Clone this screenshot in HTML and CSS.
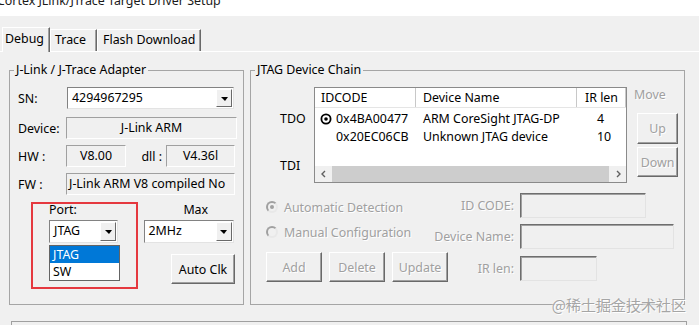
FILE: index.html
```html
<!DOCTYPE html>
<html lang="en">
<head>
  <meta charset="UTF-8" />
  <title>Cortex JLink/JTrace Target Driver Setup</title>
  <link rel="stylesheet" href="styles.css">
</head>
<body>
  <div class="titlebar"><span>Cortex JLink/JTrace Target Driver Setup</span></div>

  <div class="tabs">
    <div class="tab active">Debug</div>
    <div class="tab tab-trace">Trace</div>
    <div class="tab tab-flash">Flash Download</div>
  </div>

  <div class="panel">
    <div class="groups">
      <!-- Adapter -->
      <fieldset class="group adapter">
        <legend>J-Link / J-Trace Adapter</legend>

        <div class="row">
          <span class="lbl">SN:</span>
          <div class="combo sn-combo"><span class="combo-text">4294967295</span><span class="combo-btn"></span></div>
        </div>
        <div class="row row-device">
          <span class="lbl">Device:</span>
          <div class="field field-device">J-Link ARM</div>
        </div>
        <div class="row row-small">
          <span class="lbl">HW :</span>
          <div class="field field-hw">V8.00</div>
          <span class="lbl-dll">dll :</span>
          <div class="field field-dll">V4.36l</div>
        </div>
        <div class="row row-small">
          <span class="lbl">FW :</span>
          <div class="field field-fw">J-Link ARM V8 compiled No</div>
        </div>

        <div class="port-row">
          <div class="redbox">
            <div class="small-lbl port-lbl">Port:</div>
            <div class="combo port-combo"><span class="combo-text">JTAG</span><span class="combo-btn"></span></div>
            <ul class="droplist">
              <li class="selected">JTAG</li>
              <li>SW</li>
            </ul>
          </div>
          <div class="max-col">
            <div class="small-lbl max-lbl">Max</div>
            <div class="combo max-combo"><span class="combo-text">2MHz</span><span class="combo-btn"></span></div>
            <button class="btn autoclk">Auto Clk</button>
          </div>
        </div>
      </fieldset>

      <!-- JTAG chain -->
      <fieldset class="group chain">
        <legend>JTAG Device Chain</legend>

        <div class="chain-top">
          <div class="pins">
            <div class="pin pin-tdo">TDO</div>
            <div class="pin pin-tdi">TDI</div>
          </div>

          <div class="listview">
            <div class="lv-head">
              <div class="col col-id">IDCODE</div>
              <div class="col col-name">Device Name</div>
              <div class="col col-ir">IR len</div>
            </div>
            <div class="lv-body">
              <div class="lv-row">
                <div class="col col-id">
                  <svg class="target" width="12" height="12" viewBox="0 0 12 12">
                    <circle cx="6" cy="6" r="4.6" fill="none" stroke="#000" stroke-width="1.8"/>
                    <circle cx="6" cy="6" r="1.8" fill="#000"/>
                  </svg>
                  0x4BA00477
                </div>
                <div class="col col-name">ARM CoreSight JTAG-DP</div>
                <div class="col col-ir">4</div>
              </div>
              <div class="lv-row">
                <div class="col col-id"><span class="target-space"></span>0x20EC06CB</div>
                <div class="col col-name">Unknown JTAG device</div>
                <div class="col col-ir">10</div>
              </div>
            </div>
            <div class="hscroll">
              <span class="sb-arrow">
                <svg width="8" height="8" viewBox="0 0 8 8"><polyline points="5,1 2,4 5,7" fill="none" stroke="#606060" stroke-width="1.4"/></svg>
              </span>
              <span class="sb-thumb"></span>
              <span class="sb-arrow">
                <svg width="8" height="8" viewBox="0 0 8 8"><polyline points="3,1 6,4 3,7" fill="none" stroke="#606060" stroke-width="1.4"/></svg>
              </span>
            </div>
          </div>

          <div class="move-col">
            <div class="move-lbl">Move</div>
            <button class="btn disabled btn-up">Up</button>
            <button class="btn disabled btn-down">Down</button>
          </div>
        </div>

        <div class="chain-bottom">
          <div class="detect">
            <div class="radio-row first">
              <span class="radio checked"></span>
              <span class="dis-text">Automatic Detection</span>
            </div>
            <div class="radio-row">
              <span class="radio"></span>
              <span class="dis-text">Manual Configuration</span>
            </div>
            <div class="btn-row">
              <button class="btn disabled">Add</button>
              <button class="btn disabled">Delete</button>
              <button class="btn disabled">Update</button>
            </div>
          </div>

          <div class="manual">
            <span class="dis-text m-lbl">ID CODE:</span>
            <div class="dis-field f-id"></div>
            <span class="dis-text m-lbl">Device Name:</span>
            <div class="dis-field f-name"></div>
            <span class="dis-text m-lbl">IR len:</span>
            <div class="dis-field f-ir"></div>
          </div>
        </div>
      </fieldset>
    </div>

    <div class="bottom-box"></div>
  </div>

  <div class="watermark">@稀土掘金技术社区</div>
</body>
</html>
```

FILE: styles.css
```css
* {
  box-sizing: border-box;
}

body {
  margin: 0;
  width: 699px;
  height: 325px;
  overflow: hidden;
  position: relative;
  background-color: #f0f0f0;
  font-family: 'Noto Sans', 'Open Sans', sans-serif;
  font-size: 12.4px;
  color: #000;
}

/* title bar */
.titlebar {
  height: 16px;
  background-color: #fff;
  overflow: hidden;
}

.titlebar span {
  display: block;
  margin: -8px 0 0 -3px;
  line-height: 18px;
  color: #1a1a1a;
  white-space: nowrap;
}

/* tabs */
.tabs {
  display: flex;
  align-items: flex-end;
  height: 35px;
  padding-left: 2px;
}

.tab {
  height: 22px;
  width: 47px;
  padding: 1px 0 0 4px;
  line-height: 18px;
  border: 1px solid #fff;
  border-bottom: none;
  border-right-color: #696969;
  box-shadow: inset -1px 0 #a0a0a0;
  white-space: nowrap;
}

.tab.active {
  width: 48px;
  height: 25px;
  padding: 2px 0 0 2px;
  margin-bottom: -1px;
  position: relative;
  z-index: 1;
  background-color: #f0f0f0;
}

.tab-flash {
  width: 104px;
  padding-left: 5px;
}

.panel {
  border-top: 1px solid #fff;
  padding-left: 9px;
}

/* group boxes */
.groups {
  display: flex;
  gap: 6px;
  margin-top: 10px;
}

.group {
  margin: 0;
  min-width: 0;
  height: 243px;
  padding: 9px 8px 0 8px;
  border: 1px solid #a5a5a5;
}

.group legend {
  padding: 0 2px;
  margin-left: -4px;
  line-height: 16px;
}

.adapter {
  width: 235px;
}

.chain {
  width: 435px;
  padding-right: 5px;
}

/* adapter rows */
.row {
  display: flex;
  align-items: center;
  height: 22px;
}

.row-device {
  margin-top: 8px;
}

.row-small {
  margin-top: 6px;
}

.lbl {
  width: 48px;
  flex: none;
  white-space: nowrap;
}

.combo {
  display: flex;
  align-items: stretch;
  height: 22px;
  padding: 1px;
  background-color: #fff;
  border: 1px solid;
  border-color: #828282 #e3e3e3 #e3e3e3 #828282;
}

.combo-text {
  flex: 1;
  padding-left: 3px;
  line-height: 18px;
  white-space: nowrap;
  overflow: hidden;
}

.combo-btn {
  width: 16px;
  flex: none;
  display: flex;
  align-items: center;
  justify-content: center;
  background-color: #f0f0f0;
  border: 1px solid;
  border-color: #fff #696969 #696969 #fff;
}

.combo-btn::after {
  content: '';
  border-left: 4px solid transparent;
  border-right: 3px solid transparent;
  border-top: 4px solid #000;
  margin-top: 1px;
}

.sn-combo {
  flex: 1;
  margin: 0 1px;
}

.field {
  height: 22px;
  line-height: 20px;
  text-align: center;
  white-space: nowrap;
  overflow: hidden;
  border: 1px solid;
  border-color: #a0a0a0 #fff #fff #a0a0a0;
}

.field-device {
  flex: 1;
  margin-right: -2px;
}

.field-hw {
  width: 60px;
}

.lbl-dll {
  width: 40px;
  text-align: right;
  padding-right: 4px;
}

.field-dll {
  flex: 1;
}

.field-fw {
  flex: 1;
  text-align: left;
  padding-left: 2px;
}

/* port / max */
.port-row {
  display: flex;
  align-items: flex-start;
  margin: 7px 0 0 13px;
}

.redbox {
  width: 107px;
  height: 87px;
  padding-left: 16px;
  border: 2px solid #e5383f;
}

.small-lbl {
  line-height: 12px;
  height: 12px;
}

.port-combo {
  width: 69px;
  margin: 4px 0 0 0;
  height: 23px;
}

.droplist {
  list-style: none;
  margin: 2px 0 0 0;
  padding: 0;
  width: 71px;
  background-color: #fff;
  border: 1px solid #646464;
}

.droplist li {
  height: 17px;
  line-height: 17px;
  padding-left: 3px;
}

.droplist li.selected {
  background-color: #0078d7;
  color: #fff;
}

.max-col {
  display: flex;
  flex-direction: column;
  width: 92px;
  margin-left: 6px;
  padding-top: 2px;
}

.max-lbl {
  text-align: center;
  padding-left: 13px;
}

.max-combo {
  width: 90px;
  margin-top: 4px;
  height: 23px;
}

.btn {
  font-family: inherit;
  font-size: 12.4px;
  color: #000;
  background-color: #f0f0f0;
  border: 1px solid;
  border-color: #fff #696969 #696969 #fff;
  box-shadow: inset -1px -1px #a0a0a0;
  padding: 0;
}

.autoclk {
  width: 64px;
  height: 30px;
  margin-top: 11px;
  align-self: flex-end;
}

.btn.disabled {
  color: #a0a0a0;
  text-shadow: 1px 1px #fff;
}

/* chain top */
.chain-top {
  display: flex;
  height: 96px;
}

.pins {
  width: 55px;
  flex: none;
  padding-left: 21px;
}

.pin {
  line-height: 16px;
}

.pin-tdo {
  margin-top: 24px;
}

.pin-tdi {
  margin-top: 31px;
}

.listview {
  width: 313px;
  flex: none;
  display: flex;
  flex-direction: column;
  background-color: #fff;
  border: 1px solid #8a8a8a;
}

.lv-head {
  display: flex;
  height: 20px;
  line-height: 19px;
  border-bottom: 1px solid #e5e5e5;
}

.lv-head .col {
  border-right: 1px solid #c8c8c8;
}

.col {
  white-space: nowrap;
  overflow: hidden;
}

.col-id {
  width: 101px;
  padding-left: 6px;
  display: flex;
  align-items: center;
}

.col-name {
  width: 161px;
  padding-left: 7px;
}

.col-ir {
  width: 49px;
  padding-left: 8px;
}

.lv-body {
  flex: 1;
  padding-top: 2px;
}

.lv-row {
  display: flex;
  height: 18px;
  line-height: 18px;
}

.lv-row .col-id {
  padding-left: 5px;
}

.lv-row .col-ir {
  padding-left: 20px;
}

.target {
  margin-right: 4px;
  flex: none;
}

.target-space {
  width: 16px;
  flex: none;
}

.hscroll {
  display: flex;
  height: 16px;
  background-color: #f0f0f0;
}

.sb-arrow {
  width: 17px;
  display: flex;
  align-items: center;
  justify-content: center;
}

.sb-thumb {
  flex: 1;
  background-color: #cdcdcd;
}

.move-col {
  width: 44px;
  flex: none;
  margin-left: 7px;
  display: flex;
  flex-direction: column;
}

.move-lbl {
  line-height: 16px;
  color: #a0a0a0;
  text-shadow: 1px 1px #fff;
}

.move-col .btn {
  width: 41px;
  margin-left: 3px;
}

.btn-up {
  height: 31px;
  margin-top: 10px;
}

.btn-down {
  height: 30px;
  margin-top: 3px;
}

/* chain bottom */
.chain-bottom {
  display: flex;
  margin-top: 9px;
}

.detect {
  width: 174px;
  flex: none;
  padding-left: 7px;
}

.radio-row {
  display: flex;
  align-items: center;
  height: 16px;
  margin-top: 9px;
}

.radio-row.first {
  margin-top: 7px;
}

.radio {
  width: 12px;
  height: 12px;
  margin-right: 6px;
  border-radius: 50%;
  border: 2px solid;
  border-color: #a0a0a0 #e8e8e8 #e8e8e8 #a0a0a0;
  background-color: #f0f0f0;
  display: flex;
  align-items: center;
  justify-content: center;
}

.radio.checked::after {
  content: '';
  width: 4px;
  height: 4px;
  border-radius: 50%;
  background-color: #a0a0a0;
}

.dis-text {
  color: #a0a0a0;
  text-shadow: 1px 1px #fff;
  white-space: nowrap;
}

.btn-row {
  display: flex;
  gap: 7px;
  margin-top: 12px;
  white-space: nowrap;
}

.btn-row .btn {
  width: 56px;
  height: 30px;
  flex: none;
}

.manual {
  display: grid;
  grid-template-columns: 81px auto;
  column-gap: 6px;
  row-gap: 5px;
  align-items: center;
}

.m-lbl {
  text-align: right;
}

.dis-field {
  height: 25px;
  border: 1px solid;
  border-color: #6e6e6e #e3e3e3 #e3e3e3 #6e6e6e;
  box-shadow: inset 1px 1px #a0a0a0;
}

.f-id {
  width: 126px;
}

.f-name {
  width: 154px;
}

.f-ir {
  width: 77px;
}

.bottom-box {
  width: 676px;
  height: 20px;
  margin: 16px 0 0 2px;
  border: 1px solid #a0a0a0;
  border-bottom: none;
}

.watermark {
  position: absolute;
  right: 13px;
  top: 295px;
  font-family: 'Noto Sans CJK SC', sans-serif;
  font-size: 15px;
  line-height: 20px;
  color: #a5a5a5;
  text-shadow: 0 0 2px #fff, 1px 1px #fff;
  white-space: nowrap;
}
```
